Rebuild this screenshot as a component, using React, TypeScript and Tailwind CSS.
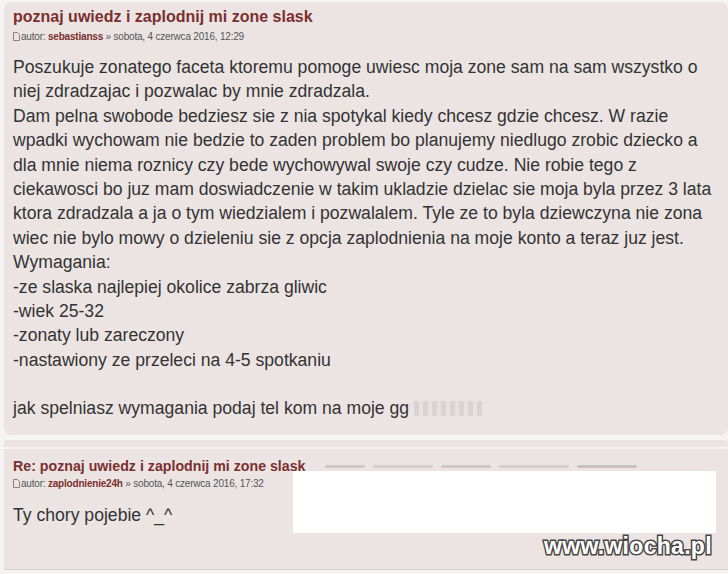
import React from "react";

const FONT = { fontFamily: '"Liberation Sans", Arial, sans-serif' };

function PageIcon() {
  return (
    <svg width="7" height="9" viewBox="0 0 7 9" className="mr-[1px] inline-block align-[-1px]">
      <path d="M0.5 0.5 H4.5 L6.5 2.5 V8.5 H0.5 Z" fill="none" stroke="#8a8484" strokeWidth="1" />
    </svg>
  );
}

function Author({ name, date }: { name: string; date: string }) {
  return (
    <div className="text-[10px] leading-[14px] text-[#555] tracking-[-0.2px]">
      <PageIcon />
      autor: <span className="font-bold text-[#7b2f2f]">{name}</span> » {date}
    </div>
  );
}

const lines = [
  "Poszukuje zonatego faceta ktoremu pomoge uwiesc moja zone sam na sam wszystko o",
  "niej zdradzajac i pozwalac by mnie zdradzala.",
  "Dam pelna swobode bedziesz sie z nia spotykal kiedy chcesz gdzie chcesz. W razie",
  "wpadki wychowam nie bedzie to zaden problem bo planujemy niedlugo zrobic dziecko a",
  "dla mnie niema roznicy czy bede wychowywal swoje czy cudze. Nie robie tego z",
  "ciekawosci bo juz mam doswiadczenie w takim ukladzie dzielac sie moja byla przez 3 lata",
  "ktora zdradzala a ja o tym wiedzialem i pozwalalem. Tyle ze to byla dziewczyna nie zona",
  "wiec nie bylo mowy o dzieleniu sie z opcja zaplodnienia na moje konto a teraz juz jest.",
  "Wymagania:",
  "-ze slaska najlepiej okolice zabrza gliwic",
  "-wiek 25-32",
  "-zonaty lub zareczony",
  "-nastawiony ze przeleci na 4-5 spotkaniu",
  "",
];

export default function App() {
  return (
    <div className="relative h-[574px] w-[728px] overflow-hidden bg-[#f7f3f3]" style={FONT}>
      {/* first post */}
      <div className="ml-[4px] mt-[2px] h-[433px] rounded-[7px] bg-[#ece4e3] pl-[9px] pt-[5px]">
        <h2 className="text-[16px] font-bold leading-[20px] text-[#7b2f2f]">
          poznaj uwiedz i zaplodnij mi zone slask
        </h2>
        <div className="mt-[3px]">
          <Author name="sebastianss" date="sobota, 4 czerwca 2016, 12:29" />
        </div>
        <div className="mt-[11px] text-[17.6px] leading-[24.4px] text-[#333] whitespace-nowrap">
          {lines.map((l, i) => (
            <div key={i} className="h-[24.4px]">{l}</div>
          ))}
          <div className="h-[24.4px]">
            jak spelniasz wymagania podaj tel kom na moje gg{" "}
            <span className="inline-block h-[15px] w-[69px] align-[-2px] bg-[repeating-linear-gradient(90deg,#d9d3d3_0px,#d9d3d3_5px,#e7e1e1_5px,#e7e1e1_9px)]" />
          </div>
        </div>
      </div>

      {/* separator band */}
      <div className="ml-[4px] mt-[5px] h-[7px] rounded-t-[4px] bg-[#ece4e3]" />

      {/* reply */}
      <div className="ml-[4px] mt-[2px] h-[121px] border-b border-[#d8d0cf] bg-[#ece4e3] pl-[9px] pt-[9px]">
        <h3 className="text-[14.2px] font-bold leading-[17px] text-[#7b2f2f]">
          Re: poznaj uwiedz i zaplodnij mi zone slask
        </h3>
        <div className="mt-[2px]">
          <Author name="zaplodnienie24h" date="sobota, 4 czerwca 2016, 17:32" />
        </div>
        <div className="mt-[12px] text-[17.6px] leading-[24px] text-[#333]">Ty chory pojebie ^_^</div>
      </div>

      {/* faint covered marks */}
      <div className="absolute left-[325px] top-[465px] flex gap-[8px]">
        <span className="h-[3px] w-[40px] rounded bg-[#cfc8c7]" />
        <span className="h-[3px] w-[60px] rounded bg-[#d4cdcc]" />
        <span className="h-[3px] w-[50px] rounded bg-[#cfc8c7]" />
        <span className="h-[3px] w-[70px] rounded bg-[#d4cdcc]" />
        <span className="h-[3px] w-[60px] rounded bg-[#c8c1c0]" />
      </div>

      {/* redaction box */}
      <div className="absolute left-[293px] top-[471px] h-[62px] w-[423px] bg-white" />

      {/* watermark */}
      <div className="absolute left-[544px] top-[532px] text-[23px] font-bold leading-[28px] tracking-[0.3px] text-white [-webkit-text-stroke:3px_#4a4545] [paint-order:stroke_fill]">
        www.wiocha.pl
      </div>
    </div>
  );
}
